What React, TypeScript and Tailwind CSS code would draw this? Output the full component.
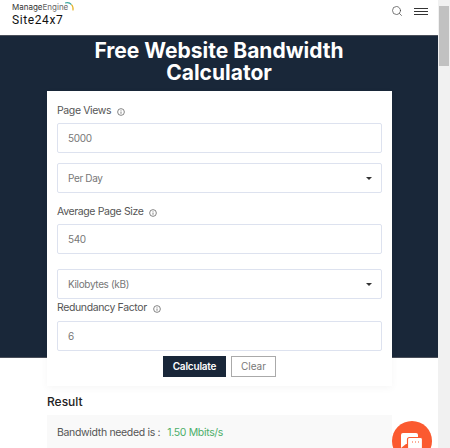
import { Search } from "lucide-react";

const inputBox = "h-[30px] border border-[#dde2ef] rounded-[2px] bg-white flex items-center pl-[10px] pr-[9px] text-[10px] tracking-[-0.35px] text-[#777]";

function InfoIcon() {
  return (
    <svg width="8" height="8" viewBox="0 0 10 10" fill="none" className="ml-[6px] mt-[2px]">
      <circle cx="5" cy="5" r="4.2" stroke="#666" strokeWidth="1" />
      <path d="M5 4.4V7.2M5 2.7V3.5" stroke="#666" strokeWidth="1" />
    </svg>
  );
}

function Label({ text }: { text: string }) {
  return (
    <div className="flex items-center h-[14px] text-[10.5px] tracking-[-0.38px] text-[#555] leading-none">
      {text}
      <InfoIcon />
    </div>
  );
}

function SelectBox({ text }: { text: string }) {
  return (
    <div className={`${inputBox} justify-between`}>
      <span>{text}</span>
      <span className="w-0 h-0 border-x-[3px] border-x-transparent border-t-[3px] border-t-[#333]" />
    </div>
  );
}

function ChatBubble() {
  return (
    <svg width="40" height="27" viewBox="0 0 40 27">
      <circle cx="20" cy="20" r="20" fill="#fb5a30" />
      <path d="M9 14a2 2 0 0 1 2-2h13a2 2 0 0 1 2 2v9H14l-5 4Z" fill="#fff" />
      <rect x="15.5" y="16.5" width="15" height="12" rx="2" fill="#fff" stroke="#fb5a30" strokeWidth="1.2" />
      <path d="M20 21h1M23 21h1M26 21h1" stroke="#fb5a30" strokeWidth="1" />
    </svg>
  );
}

export default function App() {
  return (
    <div className="flex w-[450px] h-[448px] overflow-hidden bg-white font-['Inter',sans-serif]">
      <div className="relative w-[438px] shrink-0">
        <header className="h-[36px] flex justify-between items-start pl-[12px] pr-[10px] pt-px border-b border-[#4a4f5a]">
          <div className="relative">
            <div className="flex items-center h-[12px] text-[8px] leading-none text-[#333]">
              Manage<span className="text-[#666]">Engine</span>
            </div>
            <div className="text-[12px] leading-[14px] text-[#111] font-['Roboto',sans-serif] tracking-[0.6px]">Site24x7</div>
            <svg width="10" height="9" viewBox="0 0 10 9" fill="none" className="absolute left-[53px] top-px">
              <path d="M0 1C2.5 .2 5 .8 6.5 2.6" stroke="#3aa6a0" strokeWidth="1.1" />
              <path d="M6.5 2.6C7.8 4 8.5 6 8 8.5" stroke="#e6b325" strokeWidth="1.1" />
            </svg>
          </div>
          <div className="flex items-center gap-[11px] mt-[4px]">
            <Search size={12} strokeWidth={1.4} color="#444" />
            <div className="flex flex-col gap-[2px] w-[14px]">
              <div className="h-px bg-[#333]" />
              <div className="h-px bg-[#333]" />
              <div className="h-px bg-[#333]" />
            </div>
          </div>
        </header>
        <section className="bg-[#192739] h-[322px] border-b border-[#4a4f5a] pt-[4px]">
          <h1 className="text-center text-white font-bold text-[21px] leading-[22px]">
            Free Website Bandwidth
            <br />
            Calculator
          </h1>
          <div className="relative mt-[7px] ml-[47px] w-[345px] h-[295px] bg-white px-[10px] pt-[13px] shadow-[0_2px_8px_rgba(0,0,0,0.04)]">
            <Label text="Page Views" />
            <div className={`${inputBox} mt-[5px]`}>5000</div>
            <div className="mt-[10px]">
              <SelectBox text="Per Day" />
            </div>
            <div className="mt-[12px]">
              <Label text="Average Page Size" />
            </div>
            <div className={`${inputBox} mt-[5px]`}>540</div>
            <div className="mt-[15px]">
              <SelectBox text="Kilobytes (kB)" />
            </div>
            <div className="mt-[2px]">
              <Label text="Redundancy Factor" />
            </div>
            <div className={`${inputBox} mt-[6px]`}>6</div>
            <div className="flex justify-center gap-[5px] mt-[5px]">
              <button className="w-[63px] h-[21px] bg-[#192739] text-white text-[10px] tracking-[-0.2px] font-semibold">Calculate</button>
              <button className="w-[45px] h-[21px] border border-[#aaa] bg-white text-[#777] text-[10px]">Clear</button>
            </div>
          </div>
        </section>
        <section className="ml-[47px] mt-[36px] w-[345px]">
          <h2 className="text-[12px] leading-[16px] font-medium text-[#222]">Result</h2>
          <div className="mt-[5px] h-[40px] bg-[#f9f9f9] pl-[10px] pt-[11px] text-[10.5px] leading-[14px] tracking-[-0.33px] text-[#555]">
            Bandwidth needed is :<span className="ml-[7px] text-[#4caf6a]">1.50 Mbits/s</span>
          </div>
        </section>
        <div className="absolute left-[392px] top-[421px]">
          <ChatBubble />
        </div>
      </div>
      <div className="flex-1 bg-[#f1f1f1] pt-[6px]">
        <div className="h-[60px] mx-px bg-[#c1c1c1]" />
      </div>
    </div>
  );
}
